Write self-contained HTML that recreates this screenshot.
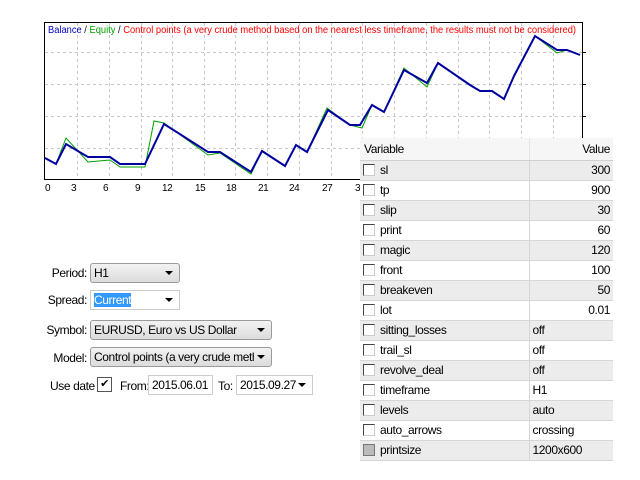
<!DOCTYPE html>
<html><head><meta charset="utf-8"><style>
*{margin:0;padding:0;box-sizing:border-box}
body{width:640px;height:480px;background:#fff;position:relative;overflow:hidden;font-family:"Liberation Sans",sans-serif;font-size:12px;letter-spacing:-0.4px;color:#000}
.abs{position:absolute}
.tb{position:absolute;left:360px;top:138px;width:253px;background:#fff}
table{width:253px;border-collapse:collapse;font-size:12px}
td{height:20px;border-bottom:1px solid #d6d6d6;padding:0 3px;white-space:nowrap}
td.v{border-left:1px solid #d6d6d6;width:84px}
tr.h td{background:#f6f6f6;border-bottom:1px solid #d0d0d0;height:22px}
tr.g td{background:#ececec}
.cb{display:inline-block;width:12px;height:12px;border:1px solid #444;border-right-color:#ccc;border-bottom-color:#ccc;background:#fff;vertical-align:-2px;margin-right:5px}
.sel{position:absolute;height:20px;border:1px solid #9a9a9a;border-radius:3px;background:linear-gradient(#f2f2f2,#dcdcdc);padding:2px 3px;font-size:12px;overflow:hidden;white-space:nowrap}
.ar{position:absolute;width:0;height:0;border-left:4px solid transparent;border-right:4px solid transparent;border-top:4px solid #000}
.lbl{position:absolute;text-align:right;font-size:12px}
</style></head><body>
<svg class="abs" style="left:0;top:0" width="640" height="200">
<rect x="44.5" y="22.5" width="538" height="157" fill="#fff" stroke="#000"/>
<g stroke="#c8c8c8" stroke-dasharray="3,3">
<line x1="45" y1="52.5" x2="582" y2="52.5"/><line x1="45" y1="84.5" x2="582" y2="84.5"/><line x1="45" y1="116.5" x2="582" y2="116.5"/><line x1="45" y1="148.5" x2="582" y2="148.5"/>
<line x1="77.5" y1="23" x2="77.5" y2="179"/><line x1="109.5" y1="23" x2="109.5" y2="179"/><line x1="141.5" y1="23" x2="141.5" y2="179"/><line x1="172.5" y1="23" x2="172.5" y2="179"/><line x1="204.5" y1="23" x2="204.5" y2="179"/><line x1="235.5" y1="23" x2="235.5" y2="179"/><line x1="267.5" y1="23" x2="267.5" y2="179"/><line x1="299.5" y1="23" x2="299.5" y2="179"/><line x1="331.5" y1="23" x2="331.5" y2="179"/><line x1="362.5" y1="23" x2="362.5" y2="179"/><line x1="394.5" y1="23" x2="394.5" y2="179"/><line x1="426.5" y1="23" x2="426.5" y2="179"/><line x1="458.5" y1="23" x2="458.5" y2="179"/><line x1="489.5" y1="23" x2="489.5" y2="179"/><line x1="521.5" y1="23" x2="521.5" y2="179"/><line x1="553.5" y1="23" x2="553.5" y2="179"/>
</g>
<g stroke="#000"><line x1="582" y1="52.5" x2="586" y2="52.5"/><line x1="582" y1="84.5" x2="586" y2="84.5"/><line x1="582" y1="116.5" x2="586" y2="116.5"/></g>
<polyline fill="none" stroke="#00a000" stroke-width="1" points="45,158 56,164 66,138 88,162 110,160 120,167 145,167 154,121 164,123 208,155 220,153 251,174 262,151 285,166 296,145 307,152 327,108 350,125 362,128 372,105 384,112 404,68 427,87 438,63 470,85 480,91 492,91 504,99 514,75 535,36 557,53 567,50 580,55"/>
<polyline fill="none" stroke="#0000a0" stroke-width="2" points="45,158 56,164 66,144 88,157 110,157 120,164 145,164 164,124 208,152 220,152 251,172 262,151 285,166 296,145 307,152 328,110 350,125 360,125 372,105 384,112 404,70 427,83 438,63 470,85 480,91 492,91 504,99 514,76 535,36 557,50 567,50 580,55"/>
<text x="48" y="33" font-size="10" font-family="Liberation Sans" textLength="528" lengthAdjust="spacingAndGlyphs" letter-spacing="0"><tspan fill="#0000c0">Balance</tspan><tspan fill="#000"> / </tspan><tspan fill="#00a000">Equity</tspan><tspan fill="#000"> / </tspan><tspan fill="#ff0000">Control points (a very crude method based on the nearest less timeframe, the results must not be considered)</tspan></text>
<g font-size="10" font-family="Liberation Sans" fill="#000">
<text x="45" y="191">0</text><text x="71" y="191">3</text><text x="103" y="191">6</text><text x="135" y="191">9</text><text x="162" y="191">12</text><text x="195" y="191">15</text><text x="226" y="191">18</text><text x="258" y="191">21</text><text x="289" y="191">24</text><text x="322" y="191">27</text><text x="355" y="191">30</text>
</g>
</svg>
<div class="tb"><table>
<tr class="h"><td style="padding-left:4px">Variable</td><td class="v" style="text-align:right;border-left-color:#e4e4e4">Value</td></tr>
<tr class="g"><td><span class="cb"></span>sl</td><td class="v" style="text-align:right">300</td></tr>
<tr><td><span class="cb"></span>tp</td><td class="v" style="text-align:right">900</td></tr>
<tr class="g"><td><span class="cb"></span>slip</td><td class="v" style="text-align:right">30</td></tr>
<tr><td><span class="cb"></span>print</td><td class="v" style="text-align:right">60</td></tr>
<tr class="g"><td><span class="cb"></span>magic</td><td class="v" style="text-align:right">120</td></tr>
<tr><td><span class="cb"></span>front</td><td class="v" style="text-align:right">100</td></tr>
<tr class="g"><td><span class="cb"></span>breakeven</td><td class="v" style="text-align:right">50</td></tr>
<tr><td><span class="cb"></span>lot</td><td class="v" style="text-align:right">0.01</td></tr>
<tr class="g"><td><span class="cb"></span>sitting_losses</td><td class="v">off</td></tr>
<tr><td><span class="cb"></span>trail_sl</td><td class="v">off</td></tr>
<tr class="g"><td><span class="cb"></span>revolve_deal</td><td class="v">off</td></tr>
<tr><td><span class="cb"></span>timeframe</td><td class="v">H1</td></tr>
<tr class="g"><td><span class="cb"></span>levels</td><td class="v">auto</td></tr>
<tr><td><span class="cb"></span>auto_arrows</td><td class="v">crossing</td></tr>
<tr class="g"><td><span class="cb" style="background:#bbb;border-color:#777"></span>printsize</td><td class="v">1200x600</td></tr>
</table></div>

<div class="lbl" style="left:30px;width:57px;top:266px">Period:</div>
<div class="sel" style="left:90px;top:263px;width:90px">H1</div><div class="ar" style="left:165px;top:271px"></div>
<div class="lbl" style="left:30px;width:57px;top:293px">Spread:</div>
<div class="sel" style="left:90px;top:290px;width:90px;background:#fff;border-color:#ccc;border-radius:0"><span style="background:#3399ff;color:#fff">Current</span></div><div class="ar" style="left:165px;top:298px"></div>
<div class="lbl" style="left:30px;width:57px;top:323px">Symbol:</div>
<div class="sel" style="left:90px;top:320px;width:182px">EURUSD, Euro vs US Dollar</div><div class="ar" style="left:257px;top:328px"></div>
<div class="lbl" style="left:30px;width:57px;top:351px">Model:</div>
<div class="sel" style="left:90px;top:347px;width:182px"><div style="width:160px;overflow:hidden">Control points (a very crude metho</div></div><div class="ar" style="left:257px;top:355px"></div>
<div class="lbl" style="left:50px;top:379px">Use date</div>
<div class="abs" style="left:97px;top:377px;width:15px;height:15px;border:1px solid #555;background:#fff;font-size:11px;line-height:13px;text-align:center">✔</div>
<div class="lbl" style="left:120px;top:379px">From:</div>
<div class="abs" style="left:148px;top:375px;width:65px;height:20px;border:1px solid #ccc;padding:2px 3px">2015.06.01</div>
<div class="lbl" style="left:218px;top:379px">To:</div>
<div class="sel" style="left:236px;top:375px;width:77px;background:#fff;border-color:#ccc;border-radius:0">2015.09.27</div><div class="ar" style="left:298px;top:383px"></div>
</body></html>
